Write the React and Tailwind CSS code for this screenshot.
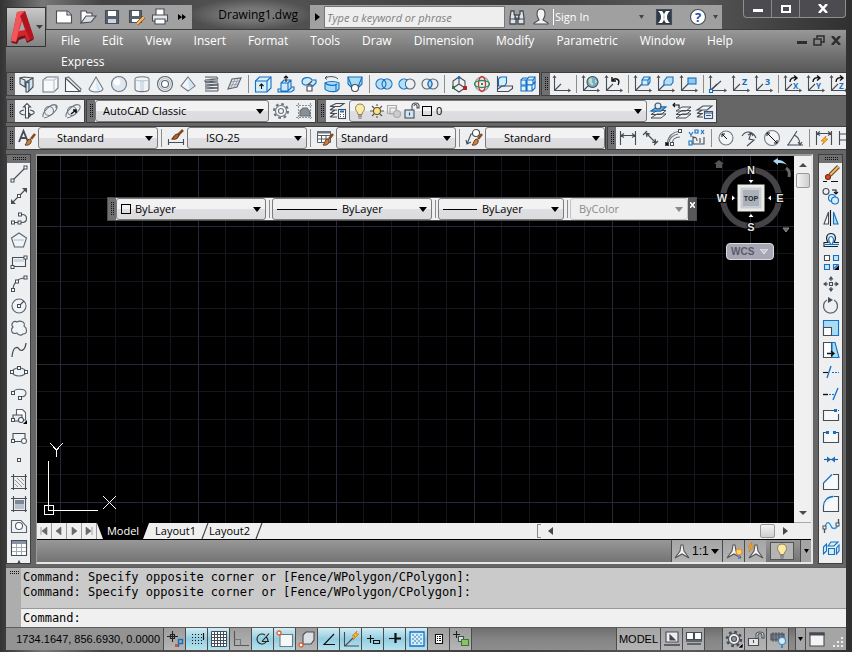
const INK = "#464d56";
const BLUE = "#1470c4";
const PALE = "#cfe6f5";

function Icon({ size = 20, children }) {
  return (
    <svg
      width={size}
      height={size}
      viewBox={`0 0 ${size} ${size}`}
      fill="none"
      stroke={INK}
      strokeWidth="1.1"
      className="shrink-0"
      aria-hidden="true"
    >
      {children}
    </svg>
  );
}

function Caret({ className = "" }) {
  return (
    <svg width="8" height="5" viewBox="0 0 8 5" className={`shrink-0 ${className}`} aria-hidden="true">
      <path d="M0 0h8L4 5z" fill="currentColor" />
    </svg>
  );
}

function SmallCaret({ className = "" }) {
  return (
    <svg width="5" height="4" viewBox="0 0 5 4" className={`shrink-0 ${className}`} aria-hidden="true">
      <path d="M0 0h5L2.5 4z" fill="currentColor" />
    </svg>
  );
}

function Axes() {
  return (
    <>
      <path d="M2.5 2v14.5H18M3 16l6-6" />
      <path d="M1 4l1.5-2.5L4 4M16 15l2.5 1.5L16 18" strokeWidth=".9" />
    </>
  );
}

function Node({ x, y, fill = "#fff" }) {
  return <rect x={x - 1.5} y={y - 1.5} width="3" height="3" fill={fill} strokeWidth="1" />;
}

function Brush() {
  return (
    <>
      <path d="M18 6l-4 5" stroke="#8b4a1c" strokeWidth="2.6" />
      <path d="M8 17c4 1 7-2 6-5l-2-1c-2 1-2 4-4 6z" fill="#c9823c" stroke="#6b3a1b" strokeWidth="1" />
    </>
  );
}

function Bulb() {
  return (
    <>
      <path d="M10 3c-3 0-4.5 2-4.5 4.5S8 11 8 13.5h4c0-2.5 2.5-3.5 2.5-6S13 3 10 3z" fill="#fdeaa5" stroke="#8b8254" strokeWidth="1" />
      <path d="M8 15h4M8.5 17h3" stroke="#5a6570" />
    </>
  );
}

function Lock() {
  return (
    <>
      <rect x="3" y="9" width="9" height="8" fill={PALE} />
      <path d="M10 9V5c0-4 7-4 7 0v2h-2V5c0-2-3-2-3 0M7.5 11.5v3" />
    </>
  );
}

function Layers() {
  return <path d="M2 17h10l5-4H8zM2 13.5h10l5-4H8zM2 10h10l5-4H8z" fill="#f1f4f6" strokeWidth="1" />;
}

const modeling = [
  ["Polysolid", <Icon><path d="M3 4l5 2v7l-5-3zM9 8l7-4v9l-5 5H9z" fill={PALE} /><path d="M12 7v10M3 4l4-1 9 1M9 8l3 1" /></Icon>],
  ["Box", <Icon><path d="M3 6l4-3h11v11l-4 4H3z" fill="#f7f9fb" stroke="#707983" /><path d="M3 6h11v12M14 6l4-3" stroke="#b9c2cb" /></Icon>],
  ["Wedge", <Icon><path d="M2.5 4v13.5H17z" fill="#f7f9fb" /><path d="M2.5 4l3-1L18 15l-1 2.5" stroke="#707983" /></Icon>],
  ["Cone", <Icon><path d="M10 3l7 12c-2 4-12 4-14 0z" fill="#f3f6f8" stroke="#707983" /><path d="M10 5l1 12 3-1z" fill={PALE} stroke="none" /></Icon>],
  ["Sphere", <Icon><circle cx="10" cy="10" r="7.5" fill="#dfe8f0" stroke="#707983" /><circle cx="8" cy="8" r="3.5" fill="#fafcfd" stroke="none" /></Icon>],
  ["Cylinder", <Icon><path d="M3 5v10c0 3.5 14 3.5 14 0V5c0-3-14-3-14 0z" fill="#f0f4f7" stroke="#707983" /><path d="M8 7h4v10H8z" fill="#d4e0e9" stroke="none" /><path d="M3 5c0 2.5 14 2.5 14 0" stroke="#b9c2cb" /></Icon>],
  ["Torus", <Icon><circle cx="10" cy="10" r="7.5" fill="#eef2f5" stroke="#59636e" /><circle cx="10" cy="10" r="5.5" stroke="#b4bcc4" /><circle cx="10" cy="10" r="3.5" fill="#fff" stroke="#59636e" /></Icon>],
  ["Pyramid", <Icon><path d="M10 3l7 9-7 5-7-5z" fill="#f3f6f8" stroke="#707983" /><path d="M10 4l1 12 5-4z" fill={PALE} stroke="none" /></Icon>],
  ["Helix", <Icon><g strokeWidth=".9"><path d="M4 3h12l1 2-13 1v2l13-1M4 8l13 1v2L4 10M4 12l13-1v3L4 13M4 15l13-1v3H4" /><path d="M4 3l12 2M4 6l13 1" stroke="#8b949d" /></g></Icon>],
  ["Planar surface", <Icon><path d="M8 5l9-1-4 9-9 2z" fill="#e3e8ed" stroke="#59636e" /><path d="M11 5L7 14M14 4.5L10 14M6.5 8l9-1M5 11.5l9-1.5" stroke="#8b949d" strokeWidth=".8" /></Icon>],
  null,
  ["Extrude", <Icon><path d="M2.5 7l4-4H18v11l-4 4H2.5z" fill="#d5effa" stroke={BLUE} /><path d="M2.5 7H14v11M14 7l4-4" stroke={BLUE} /><path d="M8.5 15v-5M6.5 12l2-2 2 2" stroke="#111" /></Icon>],
  ["Presspull", <Icon><path d="M5 16V9l3-3h7v8l-3 3H5zM5 9h7v8M12 9l3-3M15 13h3v3l-3 2H2v-3h3" fill={PALE} stroke={BLUE} /><path d="M10 8V2M8 4l2-2 2 2" stroke="#111" /></Icon>],
  ["Sweep", <Icon><path d="M3 8c0-5 8-6 10-2h4v3l-3 3-4-2c-3 2-7 1-7-2z" fill="#c8e7f7" stroke={BLUE} /><path d="M13 7l-4 4M8 12h5v5H8z" fill="#fff" /></Icon>],
  ["Revolve", <Icon><path d="M3 9v6c2 3 10 3 12 2l2-2V9C14 7 6 7 3 9z" fill="#a9dcf3" stroke={BLUE} /><path d="M3 9c3 3 10 3 12 1M14 11v6" stroke={BLUE} /><path d="M3 4c4-2 10-2 13 1M3 4l2-2M3 4l2 1.5" strokeWidth="1" /></Icon>],
  ["Loft", <Icon><path d="M3 3h14v7l-4 4H7l-4-4z" fill="#a9dcf3" stroke={BLUE} /><path d="M3 3l4 10M17 3l-4 10" stroke={BLUE} /><circle cx="10" cy="14" r="3.5" fill="#fff" /></Icon>],
  null,
  ["Union", <Icon><path d="M10 6a5 5 0 100 8 5 5 0 100-8z" fill="#b5def2" stroke={BLUE} /><path d="M10 6a5 5 0 010 8 5 5 0 010-8z" stroke={BLUE} /></Icon>],
  ["Subtract", <Icon><circle cx="13" cy="10" r="5" stroke="#59636e" /><path d="M10 6a5 5 0 100 8 6 6 0 010-8z" fill="#b5def2" stroke={BLUE} /></Icon>],
  ["Intersect", <Icon><circle cx="7" cy="10" r="5" stroke="#59636e" /><circle cx="13" cy="10" r="5" stroke="#59636e" /><path d="M10 6a5 5 0 010 8 5 5 0 010-8z" fill="#b5def2" stroke={BLUE} /></Icon>],
  null,
  ["3D move", <Icon><path d="M10 3l6 4v7l-6 4-6-4V7zM10 10V4M10 10l6 4M10 10l-6 4" /><circle cx="10" cy="3.5" r="1.5" fill={BLUE} stroke="none" /><path d="M3 12h3v3H3z" fill="#2c7a3b" stroke="none" /><path d="M14 12h4v4h-4z" fill="#b9202b" stroke="none" /></Icon>],
  ["3D rotate", <Icon><circle cx="10" cy="10" r="7" stroke="#7793ad" /><ellipse cx="10" cy="10" rx="3.5" ry="7.5" stroke="#d3352f" strokeWidth="1.3" /><ellipse cx="10" cy="10" rx="7.5" ry="3.5" stroke="#348a55" strokeWidth="1.3" /><circle cx="10" cy="10" r="1" fill="#244" stroke="none" /></Icon>],
  ["3D align", <Icon><path d="M3.5 5l2-2h6v6l-2 3h-6z" fill="#d5effa" stroke={BLUE} /><path d="M2.5 2v15.5h11l4-3V12H7l-4 3" fill="none" /></Icon>],
  ["3D array", <Icon><path d="M9 5l2-2h6v5l-2 3H9zM3 6h5v5H3z" fill="#d5effa" stroke={BLUE} /><path d="M3 12h5v5H3zM9 11h5v6H9zM14 11l3-3v6l-3 3M9 6h6v5M15 6l2-3M3 6l2-2h4" fill="#e3f2fb" stroke={BLUE} /></Icon>],
];

function AxisLetter({ children }) {
  return (
    <Icon>
      <Axes />
      <path d="M7 8c0-4 3-5 7-4M11 1.5L14 4l-3 2.5" stroke="#111" strokeWidth="1.4" />
      <text x="10" y="15" fontSize="8" fontWeight="700" fill={BLUE} stroke="none">{children}</text>
    </Icon>
  );
}

const ucs = [
  ["UCS", <Icon><Axes /></Icon>],
  null,
  ["World UCS", <Icon><Axes /><circle cx="11.5" cy="8" r="5.5" fill="#78aecb" /><path d="M8 5c2-2 4 0 3 2s2 2 1 4c-2 1-5-3-4-6zM14 5l2 3-2 1z" fill="#bfe0c3" stroke="none" /></Icon>],
  ["Previous UCS", <Icon><Axes /><path d="M8 7c3-4 9-2 6 4M8 3v4h4" stroke="#111" strokeWidth="1.4" /></Icon>],
  null,
  ["Face UCS", <Icon><Axes /><path d="M9 6l2-3h6v5l-2 3H9zM9 6h6v5M15 6l2-3" fill="#d5effa" stroke={BLUE} /></Icon>],
  ["Object UCS", <Icon><Axes /><path d="M8 7l3-4h6v5l-2 3H8z" fill="#b5def2" stroke={BLUE} /></Icon>],
  ["View UCS", <Icon><Axes /><rect x="9" y="4" width="8" height="6" fill="#8cc9ea" stroke={BLUE} /></Icon>],
  null,
  ["Origin UCS", <Icon><Axes /><path d="M3 16l10-9" /><rect x="1.5" y="15.5" width="3" height="3" fill="#fff" stroke={BLUE} /></Icon>],
  ["Z axis vector", <Icon><Axes /><text x="11" y="11" fontSize="9" fontWeight="700" fill={BLUE} stroke="none">Z</text></Icon>],
  ["3 point UCS", <Icon><Axes /><text x="11" y="11" fontSize="9" fontWeight="700" fill={BLUE} stroke="none">3</text></Icon>],
  null,
  ["Rotate about X", <AxisLetter>X</AxisLetter>],
  ["Rotate about Y", <AxisLetter>Y</AxisLetter>],
  ["Rotate about Z", <AxisLetter>Z</AxisLetter>],
];

const orbit = [
  ["Constrained orbit", <Icon><path d="M7 9c-6 1-6 5 3 5s9-4 3-5M12 12l2 2-2 2" /><path d="M8.5 17V6h-2L10 2.5 13.5 6h-2v11z" fill="#fff" /></Icon>],
  ["Free orbit", <Icon><circle cx="9" cy="10" r="4.5" fill="#e9eef2" stroke="#707983" /><path d="M3 16c-1-5 8-14 13-12 4 2-3 11-12 13M13 4h3v3" stroke="#707983" /></Icon>],
  ["Continuous orbit", <Icon><circle cx="9" cy="10" r="4.5" fill="#e9eef2" stroke="#707983" /><path d="M3 16c-1-5 8-14 13-12 4 2-3 11-12 13" stroke="#707983" /><path d="M8 13l5-4M10 9h3v3" stroke="#111" strokeWidth="1.5" /></Icon>],
];

const workspaceTools = [
  ["Workspace settings", <Icon><circle cx="10" cy="10" r="7" strokeDasharray="2.75 2.75" strokeWidth="2" stroke="#6b737c" /><circle cx="10" cy="10" r="5.5" fill="#f4f4f4" stroke="#6b737c" /><circle cx="10" cy="10" r="2.5" stroke="#6b737c" /></Icon>],
  ["My workspace", <Icon><path d="M4.5 2v16M16.5 2v16M2 4.5h16M2 16.5h16" stroke="#8a929a" strokeDasharray="2 1" /><path d="M6 10l3-3h4l3 4v4H6z" fill="#8a8f96" stroke="#666d75" /></Icon>],
];

const layerTools = [
  ["Make object's layer current", <Icon><Layers /><path d="M2 10h10l5-4H8z" fill="#6fb6dc" stroke={BLUE} /><circle cx="9" cy="5" r="3" fill="#dceefa" /></Icon>],
  ["Layer previous", <Icon><g transform="translate(2 0)"><Layers /></g><path d="M1 4h6v3M3 2L1 4l2 2" stroke="#111" /></Icon>],
  ["Layer states", <Icon><path d="M2 16h6M2 12.5h6M2 9h10l5-4H8zM2 12.5L7 9M2 16l5-3.5" fill="#f1f4f6" /><rect x="9.5" y="10.5" width="8" height="7" fill="#e6f1f8" stroke="#38577a" /><path d="M9 12h9M11 14.5h5" stroke="#38577a" /></Icon>],
];

const dimensions = [
  ["Linear", <Icon><path d="M2.5 3v14M17.5 3v14M3 7.5h14M6 5.5l-3 2 3 2M14 5.5l3 2-3 2" /></Icon>],
  ["Aligned", <Icon><path d="M2 7l4-4M13 17l4-4M5 5l10 10M5 5l1 4M5 5l4 1M15 15l-4-1M15 15l-1-4" /></Icon>],
  ["Arc length", <Icon><path d="M3 16C4 8 8 4 16 3M8 17c0-5 3-8 8-8M5 14c1-5 4-7 9-8" stroke="#6b737c" /><Node x={3} y={16} fill="#111" /><Node x={16} y={3} fill="#fff" /><Node x={8} y={16} /></Icon>],
  ["Ordinate", <Icon><path d="M6 8v8h11V9M6 10c3-2 4 1 4 3M13 10v5" /><path d="M2 4l2 3 2-3M4 7v2M14 2l3 4M17 2l-3 4M2 13h3v4H2zM8 2h3v3H8z" stroke={BLUE} /></Icon>],
  null,
  ["Radius", <Icon><circle cx="10" cy="10" r="7" fill="#f2f4f6" stroke="#707983" /><path d="M11 11L6 6M6 9V6h3" stroke="#111" strokeWidth="1" /></Icon>],
  ["Jogged", <Icon><path d="M3 8C7 2 14 3 17 10M12 5l-2 6 5 1-7 6M9 7l3-2 2 3" /></Icon>],
  ["Diameter", <Icon><circle cx="10" cy="10" r="7.5" fill="#f2f4f6" stroke="#707983" /><path d="M5 5l10 10M5 8V5h3M15 12v3h-3" stroke="#111" strokeWidth="1" /></Icon>],
  ["Angular", <Icon><path d="M2 17h16M3 17L12 3M9 7c5 2 6 6 6 10M13 14l2 3 2-3" /></Icon>],
  null,
  ["Quick dimension", <Icon><path d="M2.5 3v14M17.5 3v14M3 5.5h14M6 3.5l-3 2 3 2M14 3.5l3 2-3 2" /><path d="M12 8l-5 5h3l-2 4 6-6h-3z" fill="#f7b52a" stroke="#d77d16" strokeWidth=".8" /></Icon>],
  ["Baseline", <Icon><path d="M2.5 3v14M3 6h9M3 12h14" /></Icon>],
];

const drawTools = [
  ["Line", <Icon><path d="M4 16L16 4" /><Node x={3.5} y={16.5} /><Node x={16.5} y={3.5} /></Icon>],
  ["Construction line", <Icon><path d="M4 16L16 4" /><path d="M2 13l5 5H2zM13 2h5v5z" fill={INK} stroke="none" /><Node x={10} y={10} /></Icon>],
  ["Polyline", <Icon><path d="M4 14.5h9c6 0 6-8 0-8h-2" /><Node x={4} y={14.5} /><Node x={10.5} y={14.5} /><Node x={11} y={6.5} /></Icon>],
  ["Polygon", <Icon><path d="M10 3l7.5 5-3 9h-9l-3-9z" fill="#f1f4f6" stroke="#59636e" /><path d="M5 9h10v2H4.5z" fill="#cdd8e1" stroke="none" /></Icon>],
  ["Rectangle", <Icon><path d="M3.5 5.5h13v9h-13z" fill="#f1f4f6" /><path d="M5 7h10v3H5z" fill="#cdd8e1" stroke="none" /><Node x={3.5} y={15} /><Node x={16.5} y={5.5} /></Icon>],
  ["Arc", <Icon><path d="M4 16C4 9 9 4 16 4" /><Node x={4} y={16} /><Node x={8} y={7.5} /><Node x={16.5} y={3.5} /></Icon>],
  ["Circle", <Icon><circle cx="10" cy="10" r="7" fill="#f1f4f6" stroke="#59636e" /><path d="M10 10l5-5" /><Node x={10} y={10} /></Icon>],
  ["Revision cloud", <Icon><path d="M4 9c-3-3 1-7 4-5 3-2 9 0 7 4 3 2 4 8-1 8-2 2-5 1-6-1-5 2-7-3-4-6z" fill="#f1f4f6" stroke="#59636e" /></Icon>],
  ["Spline", <Icon><path d="M3 17C4 5 9 7 10 9s6 3 7-6" strokeWidth="1.3" /></Icon>],
  ["Ellipse", <Icon><ellipse cx="10" cy="10" rx="7" ry="4" fill="#f1f4f6" stroke="#59636e" /><Node x={3} y={10} /><Node x={17} y={10} /><Node x={10} y={6} /></Icon>],
  ["Ellipse arc", <Icon><path d="M4 9c0-5 13-5 13 0 0 3-3 4-6 4" fill="#f1f4f6" stroke="#59636e" /><Node x={4} y={9} /><Node x={11} y={14} /></Icon>],
  ["Insert block", <Icon><path d="M7.5 9V3.5h6l3 3V14h-4" fill="#fff" stroke="#59636e" /><path d="M4 9h9v6H4z" fill="#e6ecf1" /><circle cx="12" cy="14" r="2.5" fill="#fff" /><Node x={4} y={14} /><path d="M18 14v4h-4z" fill="#000" stroke="none" /></Icon>],
  ["Make block", <Icon><path d="M4 5.5h12v8H4z" fill="#f1f4f6" /><circle cx="15" cy="13" r="2.5" fill="#fff" stroke="#59636e" /><Node x={4} y={13} /></Icon>],
  ["Point", <Icon><Node x={10} y={10} /></Icon>],
  ["Hatch", <Icon><path d="M2 4.5h16M2 16.5h16M4.5 2v16M16.5 2v16" /><path d="M6 8l7 7M6 12l3 3M8 6l7 7M12 6l3 3" stroke="#888" strokeWidth=".9" /></Icon>],
  ["Gradient", <Icon><path d="M6 6h9v9H6z" fill="#b9c2cb" stroke="none" /><path d="M6 6h9v4H6z" fill="#7d8792" stroke="none" /><path d="M2 4.5h16M2 16.5h16M4.5 2v16M16.5 2v16" /></Icon>],
  ["Region", <Icon><path d="M2.5 4.5H12l5.5 6v6h-15z" fill="#f1f4f6" stroke="#59636e" /><circle cx="10" cy="10" r="3.5" fill="#fff" stroke="#59636e" /></Icon>],
  ["Table", <Icon><path d="M2.5 2.5h15v15h-15z" fill="#fff" /><path d="M3 3h14v3H3z" fill="#8793a5" stroke="none" /><path d="M3 9.5h14M3 13.5h14M7.5 6v11M12.5 6v11" stroke="#a3abb4" strokeWidth="1" /></Icon>],
  ["Multiline text", <Icon><path d="M7 7l3-6 3 6z" fill={INK} /></Icon>],
];

const modifyTools = [
  ["Erase", <Icon><path d="M17.5 2.5L9 11" stroke="#6b4721" strokeWidth="4" /><path d="M17.5 2.5L9 11" stroke="#f1b867" strokeWidth="2" /><circle cx="7" cy="13" r="2.5" fill="#d34a20" stroke="#7c2713" /><path d="M2 17.5h4M10 17.5h7" stroke="#111" /></Icon>],
  ["Copy", <Icon><circle cx="5" cy="5.5" r="3" /><path d="M11 4h4v4M13 6l2 2 2-2" stroke="#111" /><circle cx="11" cy="12" r="3.5" fill="#d5effa" stroke={BLUE} /><circle cx="14" cy="14.5" r="3.5" fill="#d5effa" stroke={BLUE} /></Icon>],
  ["Mirror", <Icon><path d="M7.5 4v12H3z" fill="#fff" /><path d="M12.5 4v12H17z" fill="#a9dcf3" stroke={BLUE} /><path d="M9.5 2v16" stroke="#111" /></Icon>],
  ["Offset", <Icon><path d="M17 16.5H3v-4h4c-3-5-1-9 3-9s6 4 3 9h5" fill="#d5effa" stroke="#222" /><path d="M4 14.5h6c-4-5-2-8 0-8s4 3 1 8h7" fill="#fff" stroke={BLUE} /></Icon>],
  ["Array", <Icon><path d="M3.5 3.5h5v5h-5z" fill="#fff" /><path d="M12.5 3.5h5v5h-5zM3.5 12.5h5v5h-5zM12.5 17v-4.5H17z" fill="#c6e6f6" stroke={BLUE} /><path d="M18 13v5h-5z" fill="#000" stroke="none" /></Icon>],
  ["Move", <Icon><path d="M8.5 8.5h3v3h-3zM10 7V4M10 13v3M7 10H4M13 10h3" /><path d="M10 2l2.5 3.5h-5zM10 18l2.5-3.5h-5zM2 10l3.5-2.5v5zM18 10l-3.5-2.5v5z" fill={INK} stroke="none" /></Icon>],
  ["Rotate", <Icon><path d="M13 4a7 7 0 11-7 0" strokeWidth="1.3" stroke="#59636e" /><path d="M7 1v6l5-3z" fill={INK} stroke="none" /></Icon>],
  ["Scale", <Icon><path d="M2.5 2.5h15v15h-15z" fill="#a9dcf3" stroke={BLUE} /><path d="M2.5 9.5h8v8h-8z" fill="#fff" /></Icon>],
  ["Stretch", <Icon><path d="M2.5 2.5h8v15h-8z" fill="#fff" /><path d="M11 2.5h3l4 15h-7z" fill="#a9dcf3" stroke={BLUE} /><path d="M6 13.5h6M10 11l3 2.5-3 2.5" stroke="#111" strokeWidth="1.3" /></Icon>],
  ["Trim", <Icon><path d="M2 10.5h5" stroke="#111" /><path d="M11 10.5h7" stroke={BLUE} strokeDasharray="2 1" /><path d="M6 16l4-12" stroke={BLUE} strokeWidth="1.3" /></Icon>],
  ["Extend", <Icon><path d="M2 10.5h5" stroke="#111" strokeWidth="1.4" /><path d="M8 10.5h5" stroke={BLUE} strokeDasharray="2 1" /><path d="M12 16l5-12" stroke={BLUE} strokeWidth="1.3" /></Icon>],
  ["Break at point", <Icon><path d="M13 4.5H2.5v10h15V8" fill="#f6f8fa" /><path d="M13 3h3v3h-3z" fill={BLUE} stroke="none" /><path d="M17 4.5h1" /></Icon>],
  ["Break", <Icon><path d="M5 4.5H2.5v10h15v-10H15" fill="#f6f8fa" /><path d="M5 3h3v3H5zM12 3h3v3h-3z" fill={BLUE} stroke="none" /></Icon>],
  ["Join", <Icon><path d="M3 9.5h14" /><path d="M6 6.5l4 3-4 3zM14 6.5l-4 3 4 3z" fill={BLUE} stroke="none" /></Icon>],
  ["Chamfer", <Icon><path d="M2.5 11v6.5h15v-15H12" fill="#f6f8fa" /><path d="M2.5 11L11 2.5" stroke={BLUE} strokeWidth="1.3" /></Icon>],
  ["Fillet", <Icon><path d="M2.5 12v5.5h15v-15H13" fill="#f6f8fa" /><path d="M2.5 12c0-5 4-9.5 10-9.5" stroke={BLUE} strokeWidth="1.3" /></Icon>],
  ["Blend curves", <Icon><path d="M3.5 17v-5M17.5 8V3" strokeWidth="1.3" /><path d="M4 11c2-7 5-4 6-1s5 4 7-1" stroke="#2c94e0" strokeWidth="1.3" /><Node x={3.5} y={11.5} /><Node x={16.5} y={8.5} /></Icon>],
  ["Explode", <Icon><path d="M2.5 9l3-3v7l-3 3zM7.5 10.5h6v6h-6zM7 8l3-4h7l-4 4zM15.5 10L18 7v6l-2.5 3z" fill="#d5effa" stroke={BLUE} /></Icon>],
];

const quickAccess = [
  ["New", <Icon><path d="M2.5 4h11l4 4v8h-15z" fill="#fff" /><path d="M13 4v4h4" fill="#dde" /></Icon>],
  ["Open", <Icon><path d="M3 16V4h5l1 2h5v3" fill="#fff" /><path d="M3 16l5-7h10l-5 6z" fill="#d8dde2" /></Icon>],
  ["Save", <Icon><path d="M3.5 3.5h13v13h-13z" fill="#55616e" /><path d="M6 4h8v5H6z" fill="#fff" stroke="none" /><path d="M6 12h8v4H6z" fill="#ccd5dd" stroke="none" /></Icon>],
  ["Save as", <Icon><path d="M3.5 3.5h12v12h-12z" fill="#55616e" /><path d="M6 4h7v5H6zM6 12h7v3H6z" fill="#fff" stroke="none" /><path d="M11 17l7-7" stroke="#8b4a1c" strokeWidth="3.5" /><path d="M11 17l7-7" stroke="#f6c06a" strokeWidth="2" /></Icon>],
  ["Plot", <Icon><path d="M6 8V2h8v6" fill="#fff" /><path d="M2.5 8h15v6h-15z" fill="#e6e9ec" /><path d="M5 12h10v5H5z" fill="#fff" /></Icon>],
];

const toggles = [
  ["Infer constraints", false, <Icon><path d="M2 7.5h11M7.5 2v11" stroke="#222" /><path d="M5.5 5.5h4v4h-4z" stroke="#222" /><path d="M13.5 10v8M13.5 10.5h4v4h-4" stroke={BLUE} strokeWidth="1.5" /><path d="M10 15h3v3h-3z" fill="#ce5a29" stroke="none" /></Icon>],
  ["Snap mode", true, <Icon><path d="M5 5.5h10M5 8.5h10M5 11.5h10M5 14.5h10" strokeDasharray="1 2" stroke="#111" /><path d="M16.5 4v7" stroke="#111" /></Icon>],
  ["Grid display", true, <Icon><path d="M2.5 2.5h15v15h-15zM2.5 5.5h15M2.5 8.5h15M2.5 11.5h15M2.5 14.5h15M5.5 2.5v15M8.5 2.5v15M11.5 2.5v15M14.5 2.5v15" fill="#fff" strokeWidth="1" /></Icon>],
  ["Ortho mode", false, <Icon><path d="M3.5 2v14.5H18" stroke="#555" /><path d="M3.5 10.5h6v6" stroke="#777" /></Icon>],
  ["Polar tracking", true, <Icon><path d="M12 6A5 5 0 1013 13M9 12.5l7-8M9 12.5h7M13 8c2 1 2 3 2 5" stroke="#222" /></Icon>],
  ["Object snap", true, <Icon><path d="M5 5.5h12.5v12H5z" fill="#f5f8fa" stroke="#777" /><circle cx="4" cy="4" r="2" fill="#fff" stroke="#e0602c" strokeWidth="1.3" /></Icon>],
  ["3D object snap", false, <Icon><path d="M6 6l3-3h8v8l-3 4H6z" fill="#dcdfe3" /><circle cx="4" cy="16" r="2" fill="#fff" stroke="#e0602c" strokeWidth="1.3" /></Icon>],
  ["Object snap tracking", true, <Icon><path d="M15 5L5 15.5h11" stroke="#111" /></Icon>],
  ["Dynamic UCS", true, <Icon><path d="M3.5 3v14H18M4 17l8-8" /><path d="M16 2l-5 5h3l-2 4 6-6h-3z" fill="#f7b52a" stroke="#d77d16" strokeWidth=".8" /></Icon>],
  ["Dynamic input", true, <Icon><path d="M4 9.5h7M7.5 6v8M10.5 11.5h6v3h-6z" stroke="#111" /></Icon>],
  ["Lineweight", true, <Icon><path d="M4 9.5h12" stroke="#111" /><path d="M10.5 4v10M10 9.5h6" stroke="#111" strokeWidth="2.2" /></Icon>],
  ["Transparency", true, <Icon><path d="M3 3h14v14H3z" fill="#d9edf9" stroke={BLUE} strokeWidth="1.3" /><path d="M5 5h2v2H5zM9 5h2v2H9zM13 5h2v2h-2zM7 7h2v2H7zM11 7h2v2h-2zM5 9h2v2H5zM9 9h2v2H9zM13 9h2v2h-2zM7 11h2v2H7zM11 11h2v2h-2zM5 13h2v2H5zM9 13h2v2H9zM13 13h2v2h-2z" fill="#7fb6de" stroke="none" /></Icon>],
  ["Quick properties", false, <Icon><path d="M6.5 5.5h7v9h-7z" fill="#fff" stroke="#111" /><path d="M8 7.5h1M10 7.5h2M8 9.5h1M10 9.5h2M8 11.5h1M10 11.5h2" stroke="#111" strokeWidth="1" /></Icon>],
  ["Selection cycling", false, <Icon><path d="M2 5.5h7M5.5 2v7" stroke="#222" /><path d="M7.5 7.5h5v5h-5z" fill="#ddd" /><path d="M10.5 10.5h7v6h-7z" fill="#8cc06b" stroke="#3b7a2b" /></Icon>],
];

function Compass({ bolt, glow }) {
  return (
    <Icon>
      <path d="M9 4h2l1 6 5 7-7-4-7 4 5-7z" fill="#f4f4f4" stroke="#555" />
      {glow && <circle cx="15" cy="11" r="3" fill="#fdd26e" stroke="#f08a24" />}
      {glow && <path d="M15 14v4" stroke="#4a8fc9" strokeWidth="2" />}
      {bolt && <path d="M6 1L2 6h3L3 11l5-6H5z" fill="#f7b52a" stroke="#d77d16" strokeWidth=".8" />}
    </Icon>
  );
}

const menus = [
  "File", "Edit", "View", "Insert", "Format", "Tools", "Draw",
  "Dimension", "Modify", "Parametric", "Window", "Help", "Express",
];

function Grip() {
  return (
    <div className="flex w-2 shrink-0 items-center justify-center bg-[#707073]">
      <div className="h-3.5 w-1 bg-[conic-gradient(#111_25%,transparent_0)] bg-[size:2px_2px]" />
    </div>
  );
}

function SideGrip() {
  return (
    <div className="flex h-2 shrink-0 items-center justify-center bg-[#707073]">
      <div className="h-1 w-3.5 bg-[conic-gradient(#111_25%,transparent_0)] bg-[size:2px_2px]" />
    </div>
  );
}

function Separator() {
  return (
    <div className="flex w-1.5 shrink-0 items-center justify-center">
      <div className="h-[18px] w-px bg-[#8d8d8d]" />
    </div>
  );
}

function ToolButton({ label, children }) {
  return (
    <button type="button" aria-label={label} className="flex h-[22px] w-[23px] shrink-0 items-center justify-center">
      {children}
    </button>
  );
}

function Tools({ items }) {
  return items.map((item, i) =>
    item ? <ToolButton key={item[0]} label={item[0]}>{item[1]}</ToolButton> : <Separator key={i} />
  );
}

function Toolbar({ children }) {
  return (
    <div role="toolbar" className="flex h-6 shrink-0 border border-[#3f3f3f] bg-[#edeff0]">
      <Grip />
      {children}
    </div>
  );
}

function Combo({ label, value, className, pad = "pl-1", lead, disabled }) {
  return (
    <div
      className={`relative flex h-[22px] items-center rounded-[3px] border ${
        disabled
          ? "border-[#c4c4c4] bg-[#efefef] text-[#8a8a8a]"
          : "border-[#7b7b7f] bg-linear-to-b from-[#f2f2f2] from-50% via-[#dedee4] via-50% to-[#dcdcdc] text-black"
      } ${className}`}
    >
      {lead}
      <select
        aria-label={label}
        disabled={disabled}
        className={`h-full min-w-0 flex-1 appearance-none bg-transparent pr-4 outline-none ${pad}`}
      >
        <option>{value}</option>
      </select>
      <Caret className="pointer-events-none absolute right-1" />
    </div>
  );
}

function TitleBar() {
  return (
    <header className="relative flex h-[30px] shrink-0 items-end border-b border-[#3c3c3c]">
      <button
        type="button"
        aria-label="Application menu"
        className="absolute top-[7px] left-0 z-10 flex h-10 w-10 items-center border border-[#333] bg-linear-to-b from-[#c9c9c9] to-[#838383]"
      >
        <svg width="38" height="38" viewBox="0 0 38 38" className="shrink-0" aria-hidden="true">
          <path d="M10 4l8-1 9 27-7 3-2-6-7 2-2 5-5-1z" fill="#d8222c" />
          <path d="M10 4l8-1-5 14-4 17-5-1z" fill="#f0575a" />
          <path d="M18 3l9 27-4 2L13 8z" fill="#b3151f" />
          <path d="M15 13l3 9-6 1z" fill="#a9a9a9" />
          <path d="M4 33l5 1 2-5 7-2 2 6 7-3-1 2-6 3-2-5-6 2-2 4-5-1z" fill="#7d0f16" />
          <path d="M29 17h7l-3.5 4z" fill="#3a3f45" />
        </svg>
      </button>
      <div className="ml-[41px] flex h-6 w-[145px] shrink-0 items-center bg-[#a1a1a1] pl-[5px]">
        {quickAccess.map(([label, icon]) => (
          <button key={label} type="button" aria-label={label} className="flex w-6 justify-center">{icon}</button>
        ))}
        <button type="button" aria-label="More" className="flex w-5 justify-center">
          <svg width="8" height="6" viewBox="0 0 8 6" aria-hidden="true"><path d="M0 0l4 3-4 3zM4 0l4 3-4 3z" /></svg>
        </button>
      </div>
      <h1 className="flex h-full w-[118px] shrink-0 items-center justify-end bg-[radial-gradient(ellipse_at_center,#777_30%,transparent_75%)] pr-3 text-xs text-black">
        Drawing1.dwg
      </h1>
      <div className="mr-[21px] flex h-6 min-w-0 flex-1 items-center bg-[#a0a0a0]">
        <button type="button" aria-label="Collapse search" className="flex w-3.5 justify-center">
          <svg width="5" height="8" viewBox="0 0 5 8" aria-hidden="true"><path d="M0 0l5 4-5 4z" /></svg>
        </button>
        <input
          type="text"
          aria-label="Search"
          placeholder="Type a keyword or phrase"
          className="h-[22px] min-w-0 flex-1 border border-[#777] bg-[#eee] px-0.5 text-[11px] italic placeholder:text-[#808080]"
        />
        <button type="button" aria-label="Find" className="flex w-6 justify-center">
          <Icon><path d="M4 4h3v3l2 4v6H3v-6zM13 4h3l1 7v6h-6v-6l2-4zM8 8h4v4H8z" fill="#dfe4e8" strokeWidth="1.3" /><path d="M3 12h6M11 12h6" /></Icon>
        </button>
        <button type="button" className="flex w-[108px] shrink-0 items-center text-[11px] text-white">
          <Icon size={24}><path d="M12 4c-3 0-4 2-4 5 0 4 2 5 2 6l-5 3v1h14v-1l-5-3c0-1 2-2 2-6 0-3-1-5-4-5z" fill="#f3f3f3" /></Icon>
          <span className="border-l border-white pl-px">Sign In</span>
        </button>
        <SmallCaret className="mr-2 ml-0.5 text-[#444]" />
        <button type="button" aria-label="Exchange" className="flex w-6 justify-center">
          <Icon><path d="M2.5 2.5h15v15h-15z" fill="#2f3a46" /><path d="M4 4c4 3 4 9 0 12h4c3-3 3-9 0-12zM16 4c-4 3-4 9 0 12h-4c-3-3-3-9 0-12z" fill="#fff" stroke="none" /></Icon>
        </button>
        <button type="button" aria-label="Help" className="ml-3 flex w-5 justify-center">
          <Icon>
            <circle cx="10" cy="10" r="7.5" fill="#fff" />
            <text x="10" y="15" textAnchor="middle" fontSize="13" fontWeight="700" fill="#1f4fa8" stroke="none">?</text>
          </Icon>
        </button>
        <SmallCaret className="mr-1 ml-[5px] text-[#444]" />
      </div>
      <div className="flex h-[18px] w-[103px] shrink-0 self-start rounded-b border border-t-0 border-[#8e8e8e] bg-[#4c4c50]">
        <button type="button" aria-label="Minimize" className="flex w-7 items-center justify-center border-r border-[#888]">
          <span className="mt-1 h-[3px] w-2.5 bg-white" />
        </button>
        <button type="button" aria-label="Maximize" className="flex w-7 items-center justify-center border-r border-[#888]">
          <span className="h-2 w-2.5 border-2 border-white" />
        </button>
        <button type="button" aria-label="Close" className="flex flex-1 items-center justify-center">
          <svg width="10" height="9" viewBox="0 0 10 9" aria-hidden="true"><path d="M1 0l8 9M9 0L1 9" stroke="#fff" strokeWidth="2.5" /></svg>
        </button>
      </div>
    </header>
  );
}

function MenuBar() {
  return (
    <div className="flex shrink-0 items-start bg-linear-to-b from-[#989898] to-[#585858]">
      <nav className="ml-11 flex flex-1 flex-wrap text-white">
        {menus.map((name) => (
          <button key={name} type="button" className="h-[21px] px-[11px] text-xs">{name}</button>
        ))}
      </nav>
      <div className="flex h-[21px] w-[55px] shrink-0 items-center gap-1.5 pl-1.5">
        <button type="button" aria-label="Minimize drawing" className="mt-1 h-[3px] w-2.5 bg-[#2d2d2d]" />
        <button type="button" aria-label="Restore drawing">
          <svg width="12" height="11" viewBox="0 0 12 11" fill="none" stroke="#2d2d2d" strokeWidth="1.5" aria-hidden="true"><path d="M4 3V1h7v6H8M1 4h7v6H1z" /></svg>
        </button>
        <button type="button" aria-label="Close drawing">
          <svg width="10" height="9" viewBox="0 0 10 9" aria-hidden="true"><path d="M1 0l8 9M9 0L1 9" stroke="#2d2d2d" strokeWidth="2.5" /></svg>
        </button>
      </div>
    </div>
  );
}

function ToolbarRows() {
  return (
    <div className="flex shrink-0 flex-col gap-[3px] overflow-hidden pb-[3px] text-[11px]">
      <div className="flex gap-px">
        <Toolbar><Tools items={modeling} /></Toolbar>
        <Toolbar><Tools items={ucs} /></Toolbar>
      </div>
      <div className="flex gap-px">
        <Toolbar><Tools items={orbit} /></Toolbar>
        <Toolbar>
          <Combo label="Workspace" value="AutoCAD Classic" className="w-[174px]" pad="pl-[7px]" />
          <Tools items={workspaceTools} />
        </Toolbar>
        <Toolbar>
          <ToolButton label="Layer properties">
            <Icon><path d="M2 16h7M2 12.5h7M2 9h7M2 5.5h10l4-3H8zM2 9l5-3.5M2 12.5L7 9M2 16l5-3.5" /><rect x="10.5" y="8.5" width="7" height="9" fill="#fff" /><path d="M12 10.5h4" stroke={BLUE} strokeWidth="2" /><path d="M12 13.5h1M15 13.5h1M12 15.5h1M15 15.5h1" /></Icon>
          </ToolButton>
          <Combo
            label="Layer"
            value="0"
            className="w-[298px]"
            lead={
              <div className="flex items-center">
                <Icon><Bulb /></Icon>
                <Icon size={16}><circle cx="7" cy="8" r="3.5" fill="#fde27d" stroke="#5d5740" /><path d="M7 1v2M7 13v2M2 3l2 2M10 5l2-2M10 11l2 2M2 13l2-2M11 8h3M0 8h3" stroke="#5d5740" /></Icon>
                <Icon size={16}><path d="M1.5 2.5h9v8h-9zM4 5h6v6H4z" stroke="#aaa" /><circle cx="11" cy="11" r="3.5" fill="#ccc" stroke="#aaa" /></Icon>
                <Icon><Lock /></Icon>
                <span className="h-2.5 w-2.5 border border-black" />
              </div>
            }
          />
          <Tools items={layerTools} />
        </Toolbar>
      </div>
      <div className="flex gap-px">
        <Toolbar>
          <ToolButton label="Text style">
            <Icon><path d="M2 14L6.5 3 11 14M4 10h5" strokeWidth="1.8" /><Brush /></Icon>
          </ToolButton>
          <Combo label="Text style" value="Standard" className="w-[120px]" pad="pl-[18px]" />
          <Separator />
          <ToolButton label="Dimension style">
            <Icon><path d="M2.5 11v6M17.5 11v6M2 14.5h15" /><path d="M17 2l-5 5" stroke="#8b4a1c" strokeWidth="2.6" /><path d="M6 11c4 1 6-1 7-4l-2-1c-2 0-3 3-5 5z" fill="#b2692a" stroke="#6b3a1b" /></Icon>
          </ToolButton>
          <Combo label="Dimension style" value="ISO-25" className="w-[120px]" pad="pl-[18px]" />
          <Separator />
          <ToolButton label="Table style">
            <Icon><path d="M2.5 3.5h13v11h-13zM2.5 7.5h13M2.5 11h13M6.5 7v7M11 7v7" fill="#fff" strokeWidth=".9" /><path d="M2 3h14v2.5H2z" fill="#667485" stroke="none" /><Brush /></Icon>
          </ToolButton>
          <Combo label="Table style" value="Standard" className="w-[120px]" />
          <Separator />
          <ToolButton label="Multileader style">
            <Icon><circle cx="12" cy="5" r="3.5" fill="#fff" /><path d="M9 6H7L3 16M2 12l1 4 4-2" /><Brush /></Icon>
          </ToolButton>
          <Combo label="Multileader style" value="Standard" className="w-[120px]" pad="pl-[18px]" />
        </Toolbar>
        <Toolbar><Tools items={dimensions} /></Toolbar>
      </div>
    </div>
  );
}

function SideToolbar({ items, label }) {
  return (
    <div role="toolbar" aria-label={label} className="flex w-[25px] shrink-0 flex-col overflow-hidden border border-[#3f3f3f] bg-[#edeff0]">
      <SideGrip />
      <div className="min-h-0 flex-1 overflow-hidden">
        {items.map(([name, icon]) => <ToolButton key={name} label={name}>{icon}</ToolButton>)}
      </div>
    </div>
  );
}

function PropertiesBar() {
  return (
    <div className="absolute top-[41px] left-[70px] flex h-6 w-[590px] border border-[#4c4c4e] bg-[#edeff0] text-[11px]">
      <Grip />
      <Combo label="Color" value="ByLayer" className="w-[150px]" lead={<span className="ml-1 h-2.5 w-2.5 border border-black" />} />
      <Separator />
      <Combo label="Linetype" value="ByLayer" className="w-[160px]" pad="pl-[5px]" lead={<span className="ml-1 h-px w-[60px] bg-black" />} />
      <Separator />
      <Combo label="Lineweight" value="ByLayer" className="w-[126px]" pad="pl-[5px]" lead={<span className="ml-1 h-px w-[34px] bg-black" />} />
      <Separator />
      <Combo label="Plot style" value="ByColor" className="min-w-0 flex-1" pad="pl-2" disabled />
      <button type="button" aria-label="Close properties" className="flex w-2 justify-center bg-[#58585a] pt-1">
        <svg width="5" height="6" viewBox="0 0 5 6" aria-hidden="true"><path d="M0 0l5 6M5 0L0 6" stroke="#fff" strokeWidth="1.6" /></svg>
      </button>
    </div>
  );
}

function ViewCube() {
  return (
    <>
      <svg width="84" height="84" viewBox="0 0 84 84" className="absolute top-0 right-0" fill="none" aria-label="View cube">
        <path d="M4 8l5-4 5 4h-2v4H6V8z" fill="#555" />
        <circle cx="41" cy="42" r="28" stroke="#454348" strokeWidth="6" />
        <path d="M63 5l5-3v2c4 0 7 2 9 5-3-2-6-2-9-2v2z" fill="#a9d6f0" />
        <path d="M76 12c3 2 4 5 3 9" stroke="#666" strokeWidth="3" />
        <path d="M73 72h6l-3 4z" fill="#666" stroke="#888" />
        <path d="M29 30h24v24H29z" fill="#c9cdd1" stroke="#ecebe7" strokeWidth="3" />
        <path d="M33 34h16v16H33z" fill="#aab1b9" />
        <path d="M38.5 24h5L41 27zM38.5 61h5L41 58zM22 39.5v5l3-2.5zM61 39.5v5L58 42z" fill="#fff" />
        <g fill="#e6e6e6" stroke="#000" strokeWidth="2" paintOrder="stroke" fontSize="11" fontWeight="700" textAnchor="middle" fontFamily="Liberation Sans, sans-serif">
          <text x="41" y="18">N</text>
          <text x="70" y="46">E</text>
          <text x="41" y="75">S</text>
          <text x="12" y="46">W</text>
        </g>
        <text x="41" y="45" fill="#252a33" fontSize="7" fontWeight="700" textAnchor="middle" fontFamily="Liberation Sans, sans-serif">TOP</text>
      </svg>
      <button
        type="button"
        className="absolute top-[87px] right-5 flex h-[17px] w-12 items-center gap-1.5 rounded border border-[#d8d8e0] bg-[#a6a6b4] pl-1 font-['Liberation_Sans',sans-serif] text-[10px] font-bold text-[#5b5b68]"
      >
        WCS
        <svg width="8" height="5" viewBox="0 0 8 5" aria-hidden="true"><path d="M0 0h8L4 5z" fill="#c6c6d2" stroke="#e3e3ea" /></svg>
      </button>
    </>
  );
}

function Canvas() {
  return (
    <div className="relative min-w-0 flex-1 overflow-hidden bg-black">
      <svg width="100%" height="100%" className="absolute inset-0" aria-hidden="true">
        <defs>
          <pattern id="grid" x="23" y="70" width="138" height="138" patternUnits="userSpaceOnUse" shapeRendering="crispEdges">
            <path d="M27.5 0v138M55.5 0v138M82.5 0v138M110.5 0v138M0 27.5h138M0 55.5h138M0 82.5h138M0 110.5h138" stroke="#14161d" />
            <path d="M.5 0v138M0 .5h138" stroke="#26283a" />
          </pattern>
        </defs>
        <rect width="100%" height="100%" fill="url(#grid)" />
      </svg>
      <svg width="90" height="84" viewBox="0 0 90 84" className="absolute bottom-0 left-0" fill="none" stroke="#fff" shapeRendering="crispEdges" aria-label="UCS icon">
        <path d="M7.5 66.5h9v9h-9zM11.5 22v49.5H61" />
        <path d="M66 57l13 13M79 57L66 70M13 4l6.5 7L26 4M19.5 11v7" />
      </svg>
      <PropertiesBar />
      <ViewCube />
    </div>
  );
}

function Arrow({ d }) {
  return <svg width="8" height="8" viewBox="0 0 8 8" className="shrink-0" aria-hidden="true"><path d={d} fill="#4a4a4a" /></svg>;
}

function LayoutTabs() {
  return (
    <div className="flex h-[17px] shrink-0 items-stretch border-b border-black bg-[#efefef] text-[11px]">
      {[
        ["First layout", "M1 0v8M7 0v8L2 4z"],
        ["Previous layout", "M6 0v8L1 4z"],
        ["Next layout", "M2 0v8l5-4z"],
        ["Last layout", "M1 0v8l5-4zM7 0v8"],
      ].map(([name, d]) => (
        <button key={name} type="button" aria-label={name} className="flex w-[15px] shrink-0 items-center justify-center border-r border-[#999]">
          <svg width="8" height="8" viewBox="0 0 8 8" aria-hidden="true"><path d={d} fill="#6a6a6a" stroke="#6a6a6a" strokeWidth=".6" /></svg>
        </button>
      ))}
      <button type="button" className="mr-1.5 w-[52px] bg-black text-white [clip-path:polygon(0_0,100%_0,calc(100%-6px)_100%,6px_100%)]">Model</button>
      {["Layout1", "Layout2"].map((name) => (
        <button key={name} type="button" className="flex w-[54px] items-center justify-end">
          {name}
          <svg width="9" height="16" viewBox="0 0 9 16" className="ml-1" aria-hidden="true"><path d="M8 0L2 16" stroke="#444" strokeWidth="1.2" /></svg>
        </button>
      ))}
      <div className="flex-1" />
      <div className="my-px w-1 border border-r-0 border-[#888]" />
      <div className="flex w-[270px] shrink items-center pl-1.5">
        <Arrow d="M6 0v8L1 4z" />
        <div className="flex-1" />
        <div className="h-3.5 w-[15px] rounded-xs border border-[#999] bg-linear-to-b from-[#f3f3f3] to-[#cfcfcf]" />
        <div className="mr-[22px] ml-1.5"><Arrow d="M2 0v8l5-4z" /></div>
      </div>
    </div>
  );
}

const stripButton = "flex h-full w-[22px] items-center justify-center border-l border-[#4b4b4b] bg-linear-to-b from-[#a5a5a5] to-[#b4b4b4]";

function DrawingWindow() {
  return (
    <section className="flex min-w-0 flex-1 flex-col border-2 border-l border-[#e6e6e6] border-t-[#9b9b9b] border-l-[#9b9b9b]">
      <div className="flex min-h-0 flex-1">
        <Canvas />
        <div className="flex w-[17px] shrink-0 flex-col items-center border-b border-[#aaa] bg-[#f0f0f0] py-[5px]">
          <Arrow d="M4 2l4 4H0z" />
          <div className="mt-1 h-[15px] w-3.5 rounded-xs border border-[#999] bg-linear-to-r from-[#f3f3f3] to-[#cfcfcf]" />
          <div className="flex-1" />
          <Arrow d="M4 6l4-4H0z" />
        </div>
      </div>
      <LayoutTabs />
      <div className="flex h-[22px] shrink-0 justify-end bg-linear-to-b from-[#989898] to-[#747474]">
        <button type="button" className="flex w-[51px] items-center border-l border-[#4b4b4b] bg-linear-to-b from-[#a5a5a5] to-[#b4b4b4] font-['Liberation_Sans',sans-serif] text-xs">
          <Compass />
          1:1
          <Caret className="ml-0.5" />
        </button>
        <button type="button" aria-label="Annotation visibility" className={stripButton}><Compass glow /></button>
        <button type="button" aria-label="Automatic scaling" className={stripButton}><Compass bolt /></button>
        <button type="button" aria-label="Hardware" className="mx-1 my-0.5 flex w-6 items-center justify-center border border-[#555] bg-[#b5b5b5]"><Icon><Bulb /></Icon></button>
        <button type="button" aria-label="Tray settings" className="ml-0.5 flex w-[11px] items-center justify-center border-l border-[#4b4b4b] bg-[#a5a5a5]"><SmallCaret /></button>
      </div>
    </section>
  );
}

function CommandWindow() {
  return (
    <section className="flex shrink-0 border-y border-[#5c5c5c] bg-[#adadad] font-['DejaVu_Sans_Mono',monospace] text-xs text-black">
      <div className="flex w-[15px] shrink-0 justify-center pt-[3px]">
        <div className="h-1 w-2.5 bg-[conic-gradient(#111_25%,transparent_0)] bg-[size:2px_2px]" />
      </div>
      <div className="min-w-0 flex-1">
        <div className="h-[41px] overflow-hidden border-b border-[#999] bg-[#cacaca] pt-0.5 pl-0.5 leading-[15px] whitespace-nowrap">
          <p>Command: Specify opposite corner or [Fence/WPolygon/CPolygon]:</p>
          <p>Command: Specify opposite corner or [Fence/WPolygon/CPolygon]:</p>
        </div>
        <label className="flex h-[18px] items-center bg-[#f0f0f0] pl-0.5">
          Command:
          <input type="text" className="min-w-0 flex-1 bg-transparent pl-2 outline-none" />
        </label>
      </div>
    </section>
  );
}

function StatusBar() {
  return (
    <footer className="flex h-[22px] shrink-0 items-stretch bg-linear-to-b from-[#6e6e6e] via-[#858585] to-[#8d8d8d] font-['Liberation_Sans',sans-serif] text-[11px] text-black">
      <div className="flex w-[157px] shrink-0 items-center justify-end bg-[#939393] pr-[3px]">1734.1647, 856.6930, 0.0000</div>
      {toggles.map(([label, on, icon]) => (
        <button
          key={label}
          type="button"
          aria-label={label}
          aria-pressed={on}
          className={`flex w-[22px] shrink-0 items-center justify-center border-l border-[#4b4b4b] ${
            on ? "bg-linear-to-b from-[#d3edf4] via-[#93cde0] to-[#b9e3ee]" : "bg-linear-to-b from-[#9d9d9d] to-[#b6b6b6]"
          }`}
        >
          {icon}
        </button>
      ))}
      <div className="flex-1 border-l border-[#4b4b4b]" />
      <button type="button" className="w-11 border-l border-[#4b4b4b] bg-linear-to-b from-[#a5a5a5] to-[#b4b4b4]">MODEL</button>
      <button type="button" aria-label="Model layout" className={stripButton}><Icon><path d="M4 3h12v10H4z" fill="#eee" /><path d="M8 6v5h5z" fill="#444" /><path d="M2 16h16" strokeWidth="1.6" /></Icon></button>
      <button type="button" aria-label="Quick view drawings" className={stripButton}><Icon><path d="M2.5 3.5h7v7h-7zM10.5 3.5h7v7h-7z" fill="#fff" /><path d="M2 12h16M3 15h14" strokeWidth="1.5" /></Icon></button>
      <div className="w-[18px] border-l border-[#4b4b4b]" />
      <button type="button" aria-label="Workspace switching" className={stripButton}><Icon><circle cx="10" cy="10" r="7" strokeDasharray="2.75 2.75" strokeWidth="2.5" /><circle cx="10" cy="10" r="5.5" fill="#eee" /><circle cx="10" cy="10" r="2.5" fill="#999" /><path d="M19 14v5h-5z" fill="#000" stroke="#fff" strokeWidth=".5" /></Icon></button>
      <button type="button" aria-label="Toolbar lock" className={stripButton}><Icon><path d="M2.5 9.5h10v7h-10z" fill="#e7e7e7" /><path d="M10 9V6c0-4 8-4 8 0v3h-2V6c0-2-4-2-4 0v3M7.5 11v3" fill="#eee" /></Icon></button>
      <button type="button" aria-label="Hardware acceleration" className={stripButton}><Icon><path d="M3 5h13v6H3z" fill="#77808a" /><path d="M5 3v10M8 3v10M11 3v10M14 3v10" strokeWidth=".8" /><circle cx="14" cy="12" r="3.5" fill="#d2ecfa" stroke="#3e8ac4" /><path d="M14 16v3" stroke="#3e8ac4" strokeWidth="2" /></Icon></button>
      <div className="w-[7px] border-l border-[#4b4b4b]" />
      <button type="button" aria-label="Status bar menu" className="flex w-[11px] items-center justify-center border-x border-[#4b4b4b] bg-[#a5a5a5]"><SmallCaret /></button>
      <button type="button" aria-label="Clean screen" className="flex w-[22px] items-center justify-center bg-[#a5a5a5]"><Icon><path d="M3 4h14v13H3z" fill="#f4f4f4" /><path d="M3 4h14v2H3z" fill="#444b53" /></Icon></button>
      <div className="flex w-[18px] items-end justify-end bg-[#a5a5a5]">
        <svg width="14" height="14" viewBox="0 0 14 14" aria-hidden="true"><path d="M9 1h2v2H9zM5 5h2v2H5zM9 5h2v2H9zM1 9h2v2H1zM5 9h2v2H5zM9 9h2v2H9z" fill="#eee" /></svg>
      </div>
    </footer>
  );
}

export default function App() {
  return (
    <div className="flex h-screen flex-col overflow-hidden bg-[linear-gradient(90deg,#333,#777_5%,#444_12%,#555_30%,#3c3c3c_60%,#5a5a5a_80%,#303030)] px-1.5 pb-0.5 font-['Open_Sans','Noto_Sans',sans-serif]">
      <TitleBar />
      <div className="flex min-h-0 flex-1 flex-col bg-[#666]">
        <MenuBar />
        <ToolbarRows />
        <main className="flex min-h-0 flex-1 gap-[5px] pt-px pr-[3px] pb-[3px]">
          <SideToolbar items={drawTools} label="Draw" />
          <DrawingWindow />
          <SideToolbar items={modifyTools} label="Modify" />
        </main>
        <CommandWindow />
        <StatusBar />
      </div>
    </div>
  );
}
